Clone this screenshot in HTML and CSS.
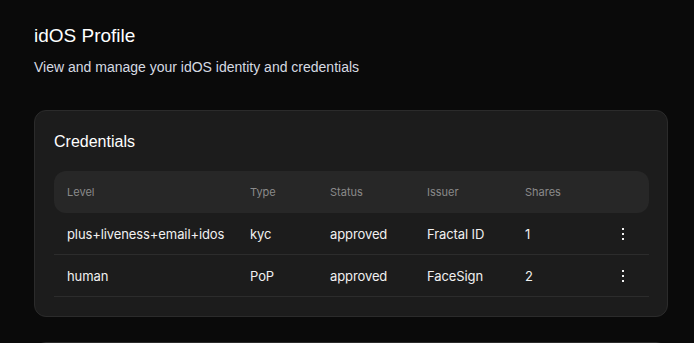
FILE: index.html
```html
<!DOCTYPE html>
<html lang="en">
<head>
    <meta charset="UTF-8">
    <meta name="viewport" content="width=device-width, initial-scale=1.0">
    <title>idOS Profile</title>
    <link rel="stylesheet" href="styles.css">
</head>
<body>
    <main class="page">
        <div class="page-head">
            <h1>idOS Profile</h1>
            <p>View and manage your idOS identity and credentials</p>
        </div>

        <section class="card">
            <h2>Credentials</h2>
            <table class="cred-table">
                <colgroup>
                    <col class="col-level">
                    <col class="col-type">
                    <col class="col-status">
                    <col class="col-issuer">
                    <col class="col-shares">
                    <col class="col-action">
                </colgroup>
                <thead>
                    <tr>
                        <th>Level</th>
                        <th>Type</th>
                        <th>Status</th>
                        <th>Issuer</th>
                        <th>Shares</th>
                        <th></th>
                    </tr>
                </thead>
                <tbody>
                    <tr>
                        <td>plus+liveness+email+idos</td>
                        <td>kyc</td>
                        <td>approved</td>
                        <td>Fractal ID</td>
                        <td>1</td>
                        <td class="action"><button class="kebab" aria-label="More"><span></span><span></span><span></span></button></td>
                    </tr>
                    <tr>
                        <td>human</td>
                        <td>PoP</td>
                        <td>approved</td>
                        <td>FaceSign</td>
                        <td>2</td>
                        <td class="action"><button class="kebab" aria-label="More"><span></span><span></span><span></span></button></td>
                    </tr>
                </tbody>
            </table>
        </section>

        <section class="card card-next"></section>
    </main>
</body>
</html>
```

FILE: styles.css
```css
body {
    margin: 0;
    background-color: #0a0a0a;
    color: #f2f2f2;
    font-family: 'Liberation Sans', Arial, sans-serif;
}
.page {
    padding: 24px 26px 0 34px;
}
.page-head h1 {
    margin: 0;
    font-size: 19px;
    font-weight: 400;
    line-height: 24px;
    color: #ffffff;
}
.page-head p {
    margin: 10px 0 0;
    font-size: 14px;
    line-height: 18px;
    color: #d6dae2;
}
.card {
    margin-top: 34px;
    background-color: #1c1c1c;
    border: 1px solid #2b2b2b;
    border-radius: 12px;
    padding: 21px 19px 19px 19px;
}
.card h2 {
    margin: 0 0 19px;
    font-size: 16px;
    font-weight: 400;
    line-height: 20px;
    color: #ffffff;
}
.card-next {
    margin-top: 25px;
    height: 80px;
    background-color: #141414;
}
.cred-table {
    width: 100%;
    table-layout: fixed;
    border-collapse: separate;
    border-spacing: 0;
    font-family: Inter, 'Noto Sans', sans-serif;
}
.col-level { width: 183px; }
.col-type { width: 80px; }
.col-status { width: 97px; }
.col-issuer { width: 98px; }
.col-shares { width: 85px; }
.col-action { width: 52px; }
.cred-table th {
    height: 42px;
    padding: 0 0 0 13px;
    background-color: #272727;
    color: #8a8a8a;
    font-size: 11px;
    font-weight: 400;
    text-align: left;
}
.cred-table th:first-child {
    border-radius: 12px 0 0 12px;
}
.cred-table th:last-child {
    border-radius: 0 12px 12px 0;
}
.cred-table td {
    height: 41px;
    padding: 0 0 0 13px;
    border-bottom: 1px solid #2c2c2c;
    font-size: 13px;
    letter-spacing: -0.1px;
    color: #f0f0f0;
    white-space: nowrap;
}
.cred-table td.action {
    padding: 0;
    text-align: center;
}
.kebab {
    display: inline-flex;
    flex-direction: column;
    align-items: center;
    gap: 3px;
    padding: 2px 4px;
    background: none;
    border: none;
    cursor: pointer;
    vertical-align: middle;
}
.kebab span {
    width: 2px;
    height: 2px;
    background-color: #f0f0f0;
}
```
